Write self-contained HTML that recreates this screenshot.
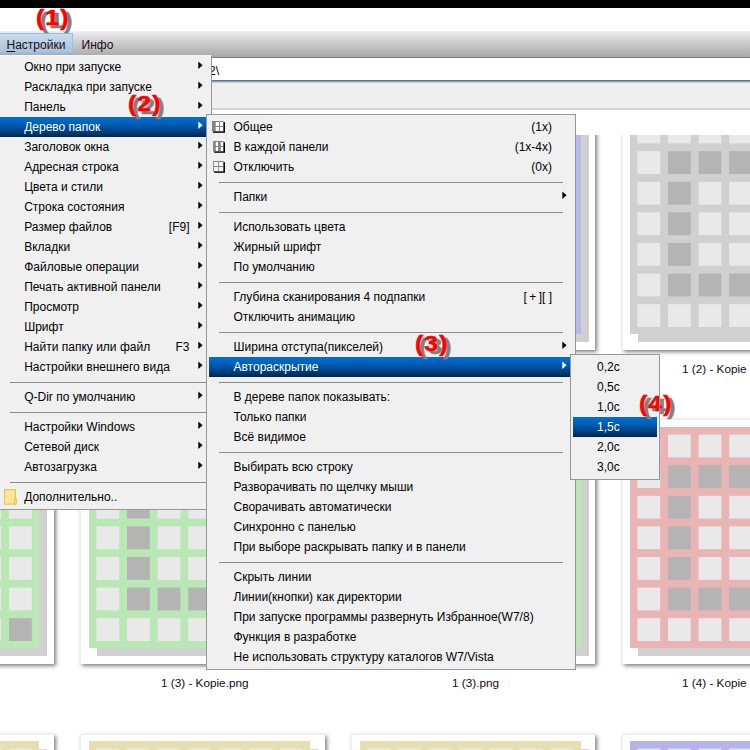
<!DOCTYPE html>
<html><head><meta charset="utf-8"><style>
*{margin:0;padding:0;box-sizing:border-box}
html,body{width:750px;height:750px;overflow:hidden;background:#fff;font-family:"Liberation Sans", sans-serif;font-size:12px;color:#000}
.abs{position:absolute}
#topbar{position:absolute;left:0;top:0;width:750px;height:8px;background:#000}
#menubar{position:absolute;left:0;top:31px;width:750px;height:27px;background:linear-gradient(#f0f0f0 0px,#d4d4d4 9px,#a9a9a9 25.5px,#7a7a7a 26.5px)}
#mbhl{position:absolute;left:-1px;top:33px;width:73.5px;height:20px;border:1px solid #90c2ee;background:linear-gradient(#c9dcee,#a9c1da)}
.mbt{position:absolute;top:38px;font-size:12px;color:#1a0a1a;white-space:nowrap}
#addr{position:absolute;left:0;top:58px;width:750px;height:22px;background:#fff}
#addrb{position:absolute;left:0;top:80px;width:750px;height:3px;background:linear-gradient(#707070 0,#707070 33%,#80a8cc 33%,#80a8cc 80%,#c8c8c8 80%)}
#tool{position:absolute;left:0;top:83px;width:750px;height:27px;background:linear-gradient(#efefef 0,#efefef 25px,#d6d6d6 25px)}
#content{position:absolute;left:0;top:135px;width:750px;height:615px;overflow:hidden}
#cin{position:absolute;left:0;top:-135px;width:750px;height:750px}
.fr{position:absolute;width:244.4px;height:244.8px;background:#fff;box-shadow:inset 1px 1px 1px rgba(0,0,0,0.07),2px 2px 4px rgba(0,0,0,0.5)}
.lbl{position:absolute;font-size:11.75px;white-space:nowrap;color:#140a14}
.menu{position:absolute;background:#f0f0f0;border:1px solid #979797;overflow:hidden}
.m1{border-top-color:#f6f6f6 !important}
.menu .tx{position:absolute;height:20px;line-height:20px;white-space:nowrap}
.menu .sc{position:absolute;height:20px;line-height:20px;white-space:nowrap}
.menu .sep{position:absolute;height:1px;background:#8c8c8c}
.menu .hlb{position:absolute;height:20px;background:linear-gradient(#0070d6,#005ab0 40%,#003e7c 75%,#00264c)}
.an{position:absolute;font-family:"Liberation Sans",sans-serif;font-weight:bold;font-size:22px;line-height:24px;color:#ff0000;-webkit-text-stroke:0.6px #ff0000;white-space:nowrap;letter-spacing:1px;transform:scaleX(1.12);transform-origin:0 0}
.an.sh{color:#808080;-webkit-text-stroke:0.6px #808080}
</style></head><body>
<div id="topbar"></div>
<div id="menubar"></div>
<div id="mbhl"></div>
<div class="mbt" style="left:6.5px"><u style="text-decoration-thickness:1px;text-underline-offset:2px">Н</u>астройки</div>
<div class="mbt" style="left:81.5px">Инфо</div>
<div id="addr"><div class="abs" style="left:209px;top:5.5px;font-size:12px;white-space:nowrap">2\</div></div>
<div id="addrb"></div>
<div id="tool"></div>
<div id="content"><div id="cin">
<div class="fr" style="left:-190.7px;top:105.6px"></div><svg style="position:absolute;left:-182.29999999999998px;top:113.39999999999999px" width="229" height="229"><rect x="8" y="8" width="221" height="221" fill="#d0d0d0"/><rect x="0" y="0" width="221" height="221" fill="#bae8b4"/><rect x="7.40" y="7.60" width="22.8" height="22.8" fill="#e9e9e9"/><rect x="38.00" y="7.60" width="22.8" height="22.8" fill="#e9e9e9"/><rect x="68.60" y="7.60" width="22.8" height="22.8" fill="#e9e9e9"/><rect x="99.20" y="7.60" width="22.8" height="22.8" fill="#e9e9e9"/><rect x="129.80" y="7.60" width="22.8" height="22.8" fill="#e9e9e9"/><rect x="160.40" y="7.60" width="22.8" height="22.8" fill="#e9e9e9"/><rect x="191.00" y="7.60" width="22.8" height="22.8" fill="#e9e9e9"/><rect x="7.40" y="38.20" width="22.8" height="22.8" fill="#e9e9e9"/><rect x="38.00" y="38.20" width="22.8" height="22.8" fill="#b4b4b4"/><rect x="68.60" y="38.20" width="22.8" height="22.8" fill="#b4b4b4"/><rect x="99.20" y="38.20" width="22.8" height="22.8" fill="#b4b4b4"/><rect x="129.80" y="38.20" width="22.8" height="22.8" fill="#b4b4b4"/><rect x="160.40" y="38.20" width="22.8" height="22.8" fill="#b4b4b4"/><rect x="191.00" y="38.20" width="22.8" height="22.8" fill="#e9e9e9"/><rect x="7.40" y="68.80" width="22.8" height="22.8" fill="#e9e9e9"/><rect x="38.00" y="68.80" width="22.8" height="22.8" fill="#b4b4b4"/><rect x="68.60" y="68.80" width="22.8" height="22.8" fill="#e9e9e9"/><rect x="99.20" y="68.80" width="22.8" height="22.8" fill="#e9e9e9"/><rect x="129.80" y="68.80" width="22.8" height="22.8" fill="#e9e9e9"/><rect x="160.40" y="68.80" width="22.8" height="22.8" fill="#e9e9e9"/><rect x="191.00" y="68.80" width="22.8" height="22.8" fill="#e9e9e9"/><rect x="7.40" y="99.40" width="22.8" height="22.8" fill="#e9e9e9"/><rect x="38.00" y="99.40" width="22.8" height="22.8" fill="#b4b4b4"/><rect x="68.60" y="99.40" width="22.8" height="22.8" fill="#e9e9e9"/><rect x="99.20" y="99.40" width="22.8" height="22.8" fill="#e9e9e9"/><rect x="129.80" y="99.40" width="22.8" height="22.8" fill="#e9e9e9"/><rect x="160.40" y="99.40" width="22.8" height="22.8" fill="#e9e9e9"/><rect x="191.00" y="99.40" width="22.8" height="22.8" fill="#e9e9e9"/><rect x="7.40" y="130.00" width="22.8" height="22.8" fill="#e9e9e9"/><rect x="38.00" y="130.00" width="22.8" height="22.8" fill="#b4b4b4"/><rect x="68.60" y="130.00" width="22.8" height="22.8" fill="#e9e9e9"/><rect x="99.20" y="130.00" width="22.8" height="22.8" fill="#e9e9e9"/><rect x="129.80" y="130.00" width="22.8" height="22.8" fill="#e9e9e9"/><rect x="160.40" y="130.00" width="22.8" height="22.8" fill="#e9e9e9"/><rect x="191.00" y="130.00" width="22.8" height="22.8" fill="#e9e9e9"/><rect x="7.40" y="160.60" width="22.8" height="22.8" fill="#e9e9e9"/><rect x="38.00" y="160.60" width="22.8" height="22.8" fill="#b4b4b4"/><rect x="68.60" y="160.60" width="22.8" height="22.8" fill="#b4b4b4"/><rect x="99.20" y="160.60" width="22.8" height="22.8" fill="#b4b4b4"/><rect x="129.80" y="160.60" width="22.8" height="22.8" fill="#b4b4b4"/><rect x="160.40" y="160.60" width="22.8" height="22.8" fill="#b4b4b4"/><rect x="191.00" y="160.60" width="22.8" height="22.8" fill="#e9e9e9"/><rect x="7.40" y="191.20" width="22.8" height="22.8" fill="#e9e9e9"/><rect x="38.00" y="191.20" width="22.8" height="22.8" fill="#e9e9e9"/><rect x="68.60" y="191.20" width="22.8" height="22.8" fill="#e9e9e9"/><rect x="99.20" y="191.20" width="22.8" height="22.8" fill="#e9e9e9"/><rect x="129.80" y="191.20" width="22.8" height="22.8" fill="#e9e9e9"/><rect x="160.40" y="191.20" width="22.8" height="22.8" fill="#e9e9e9"/><rect x="191.00" y="191.20" width="22.8" height="22.8" fill="#e9e9e9"/></svg><div class="fr" style="left:80.3px;top:105.6px"></div><svg style="position:absolute;left:88.7px;top:113.39999999999999px" width="229" height="229"><rect x="8" y="8" width="221" height="221" fill="#d0d0d0"/><rect x="0" y="0" width="221" height="221" fill="#bae8b4"/><rect x="7.40" y="7.60" width="22.8" height="22.8" fill="#e9e9e9"/><rect x="38.00" y="7.60" width="22.8" height="22.8" fill="#e9e9e9"/><rect x="68.60" y="7.60" width="22.8" height="22.8" fill="#e9e9e9"/><rect x="99.20" y="7.60" width="22.8" height="22.8" fill="#e9e9e9"/><rect x="129.80" y="7.60" width="22.8" height="22.8" fill="#e9e9e9"/><rect x="160.40" y="7.60" width="22.8" height="22.8" fill="#e9e9e9"/><rect x="191.00" y="7.60" width="22.8" height="22.8" fill="#e9e9e9"/><rect x="7.40" y="38.20" width="22.8" height="22.8" fill="#e9e9e9"/><rect x="38.00" y="38.20" width="22.8" height="22.8" fill="#b4b4b4"/><rect x="68.60" y="38.20" width="22.8" height="22.8" fill="#b4b4b4"/><rect x="99.20" y="38.20" width="22.8" height="22.8" fill="#b4b4b4"/><rect x="129.80" y="38.20" width="22.8" height="22.8" fill="#b4b4b4"/><rect x="160.40" y="38.20" width="22.8" height="22.8" fill="#b4b4b4"/><rect x="191.00" y="38.20" width="22.8" height="22.8" fill="#e9e9e9"/><rect x="7.40" y="68.80" width="22.8" height="22.8" fill="#e9e9e9"/><rect x="38.00" y="68.80" width="22.8" height="22.8" fill="#b4b4b4"/><rect x="68.60" y="68.80" width="22.8" height="22.8" fill="#e9e9e9"/><rect x="99.20" y="68.80" width="22.8" height="22.8" fill="#e9e9e9"/><rect x="129.80" y="68.80" width="22.8" height="22.8" fill="#e9e9e9"/><rect x="160.40" y="68.80" width="22.8" height="22.8" fill="#e9e9e9"/><rect x="191.00" y="68.80" width="22.8" height="22.8" fill="#e9e9e9"/><rect x="7.40" y="99.40" width="22.8" height="22.8" fill="#e9e9e9"/><rect x="38.00" y="99.40" width="22.8" height="22.8" fill="#b4b4b4"/><rect x="68.60" y="99.40" width="22.8" height="22.8" fill="#e9e9e9"/><rect x="99.20" y="99.40" width="22.8" height="22.8" fill="#e9e9e9"/><rect x="129.80" y="99.40" width="22.8" height="22.8" fill="#e9e9e9"/><rect x="160.40" y="99.40" width="22.8" height="22.8" fill="#e9e9e9"/><rect x="191.00" y="99.40" width="22.8" height="22.8" fill="#e9e9e9"/><rect x="7.40" y="130.00" width="22.8" height="22.8" fill="#e9e9e9"/><rect x="38.00" y="130.00" width="22.8" height="22.8" fill="#b4b4b4"/><rect x="68.60" y="130.00" width="22.8" height="22.8" fill="#e9e9e9"/><rect x="99.20" y="130.00" width="22.8" height="22.8" fill="#e9e9e9"/><rect x="129.80" y="130.00" width="22.8" height="22.8" fill="#e9e9e9"/><rect x="160.40" y="130.00" width="22.8" height="22.8" fill="#e9e9e9"/><rect x="191.00" y="130.00" width="22.8" height="22.8" fill="#e9e9e9"/><rect x="7.40" y="160.60" width="22.8" height="22.8" fill="#e9e9e9"/><rect x="38.00" y="160.60" width="22.8" height="22.8" fill="#b4b4b4"/><rect x="68.60" y="160.60" width="22.8" height="22.8" fill="#b4b4b4"/><rect x="99.20" y="160.60" width="22.8" height="22.8" fill="#b4b4b4"/><rect x="129.80" y="160.60" width="22.8" height="22.8" fill="#b4b4b4"/><rect x="160.40" y="160.60" width="22.8" height="22.8" fill="#b4b4b4"/><rect x="191.00" y="160.60" width="22.8" height="22.8" fill="#e9e9e9"/><rect x="7.40" y="191.20" width="22.8" height="22.8" fill="#e9e9e9"/><rect x="38.00" y="191.20" width="22.8" height="22.8" fill="#e9e9e9"/><rect x="68.60" y="191.20" width="22.8" height="22.8" fill="#e9e9e9"/><rect x="99.20" y="191.20" width="22.8" height="22.8" fill="#e9e9e9"/><rect x="129.80" y="191.20" width="22.8" height="22.8" fill="#e9e9e9"/><rect x="160.40" y="191.20" width="22.8" height="22.8" fill="#e9e9e9"/><rect x="191.00" y="191.20" width="22.8" height="22.8" fill="#e9e9e9"/></svg><div class="fr" style="left:351.1px;top:105.6px"></div><svg style="position:absolute;left:359.5px;top:113.39999999999999px" width="229" height="229"><rect x="8" y="8" width="221" height="221" fill="#d0d0d0"/><rect x="0" y="0" width="221" height="221" fill="#b8b8ec"/><rect x="7.40" y="7.60" width="22.8" height="22.8" fill="#e9e9e9"/><rect x="38.00" y="7.60" width="22.8" height="22.8" fill="#e9e9e9"/><rect x="68.60" y="7.60" width="22.8" height="22.8" fill="#e9e9e9"/><rect x="99.20" y="7.60" width="22.8" height="22.8" fill="#e9e9e9"/><rect x="129.80" y="7.60" width="22.8" height="22.8" fill="#e9e9e9"/><rect x="160.40" y="7.60" width="22.8" height="22.8" fill="#e9e9e9"/><rect x="191.00" y="7.60" width="22.8" height="22.8" fill="#e9e9e9"/><rect x="7.40" y="38.20" width="22.8" height="22.8" fill="#e9e9e9"/><rect x="38.00" y="38.20" width="22.8" height="22.8" fill="#b4b4b4"/><rect x="68.60" y="38.20" width="22.8" height="22.8" fill="#b4b4b4"/><rect x="99.20" y="38.20" width="22.8" height="22.8" fill="#b4b4b4"/><rect x="129.80" y="38.20" width="22.8" height="22.8" fill="#b4b4b4"/><rect x="160.40" y="38.20" width="22.8" height="22.8" fill="#b4b4b4"/><rect x="191.00" y="38.20" width="22.8" height="22.8" fill="#e9e9e9"/><rect x="7.40" y="68.80" width="22.8" height="22.8" fill="#e9e9e9"/><rect x="38.00" y="68.80" width="22.8" height="22.8" fill="#b4b4b4"/><rect x="68.60" y="68.80" width="22.8" height="22.8" fill="#e9e9e9"/><rect x="99.20" y="68.80" width="22.8" height="22.8" fill="#e9e9e9"/><rect x="129.80" y="68.80" width="22.8" height="22.8" fill="#e9e9e9"/><rect x="160.40" y="68.80" width="22.8" height="22.8" fill="#e9e9e9"/><rect x="191.00" y="68.80" width="22.8" height="22.8" fill="#e9e9e9"/><rect x="7.40" y="99.40" width="22.8" height="22.8" fill="#e9e9e9"/><rect x="38.00" y="99.40" width="22.8" height="22.8" fill="#b4b4b4"/><rect x="68.60" y="99.40" width="22.8" height="22.8" fill="#e9e9e9"/><rect x="99.20" y="99.40" width="22.8" height="22.8" fill="#e9e9e9"/><rect x="129.80" y="99.40" width="22.8" height="22.8" fill="#e9e9e9"/><rect x="160.40" y="99.40" width="22.8" height="22.8" fill="#e9e9e9"/><rect x="191.00" y="99.40" width="22.8" height="22.8" fill="#e9e9e9"/><rect x="7.40" y="130.00" width="22.8" height="22.8" fill="#e9e9e9"/><rect x="38.00" y="130.00" width="22.8" height="22.8" fill="#b4b4b4"/><rect x="68.60" y="130.00" width="22.8" height="22.8" fill="#e9e9e9"/><rect x="99.20" y="130.00" width="22.8" height="22.8" fill="#e9e9e9"/><rect x="129.80" y="130.00" width="22.8" height="22.8" fill="#e9e9e9"/><rect x="160.40" y="130.00" width="22.8" height="22.8" fill="#e9e9e9"/><rect x="191.00" y="130.00" width="22.8" height="22.8" fill="#e9e9e9"/><rect x="7.40" y="160.60" width="22.8" height="22.8" fill="#e9e9e9"/><rect x="38.00" y="160.60" width="22.8" height="22.8" fill="#b4b4b4"/><rect x="68.60" y="160.60" width="22.8" height="22.8" fill="#b4b4b4"/><rect x="99.20" y="160.60" width="22.8" height="22.8" fill="#b4b4b4"/><rect x="129.80" y="160.60" width="22.8" height="22.8" fill="#b4b4b4"/><rect x="160.40" y="160.60" width="22.8" height="22.8" fill="#b4b4b4"/><rect x="191.00" y="160.60" width="22.8" height="22.8" fill="#e9e9e9"/><rect x="7.40" y="191.20" width="22.8" height="22.8" fill="#e9e9e9"/><rect x="38.00" y="191.20" width="22.8" height="22.8" fill="#e9e9e9"/><rect x="68.60" y="191.20" width="22.8" height="22.8" fill="#e9e9e9"/><rect x="99.20" y="191.20" width="22.8" height="22.8" fill="#e9e9e9"/><rect x="129.80" y="191.20" width="22.8" height="22.8" fill="#e9e9e9"/><rect x="160.40" y="191.20" width="22.8" height="22.8" fill="#e9e9e9"/><rect x="191.00" y="191.20" width="22.8" height="22.8" fill="#e9e9e9"/></svg><div class="fr" style="left:622.0px;top:105.6px"></div><svg style="position:absolute;left:630.4px;top:113.39999999999999px" width="229" height="229"><rect x="8" y="8" width="221" height="221" fill="#d0d0d0"/><rect x="0" y="0" width="221" height="221" fill="#d0d0d0"/><rect x="7.40" y="7.60" width="22.8" height="22.8" fill="#e9e9e9"/><rect x="38.00" y="7.60" width="22.8" height="22.8" fill="#e9e9e9"/><rect x="68.60" y="7.60" width="22.8" height="22.8" fill="#e9e9e9"/><rect x="99.20" y="7.60" width="22.8" height="22.8" fill="#e9e9e9"/><rect x="129.80" y="7.60" width="22.8" height="22.8" fill="#e9e9e9"/><rect x="160.40" y="7.60" width="22.8" height="22.8" fill="#e9e9e9"/><rect x="191.00" y="7.60" width="22.8" height="22.8" fill="#e9e9e9"/><rect x="7.40" y="38.20" width="22.8" height="22.8" fill="#e9e9e9"/><rect x="38.00" y="38.20" width="22.8" height="22.8" fill="#b4b4b4"/><rect x="68.60" y="38.20" width="22.8" height="22.8" fill="#b4b4b4"/><rect x="99.20" y="38.20" width="22.8" height="22.8" fill="#b4b4b4"/><rect x="129.80" y="38.20" width="22.8" height="22.8" fill="#b4b4b4"/><rect x="160.40" y="38.20" width="22.8" height="22.8" fill="#b4b4b4"/><rect x="191.00" y="38.20" width="22.8" height="22.8" fill="#e9e9e9"/><rect x="7.40" y="68.80" width="22.8" height="22.8" fill="#e9e9e9"/><rect x="38.00" y="68.80" width="22.8" height="22.8" fill="#b4b4b4"/><rect x="68.60" y="68.80" width="22.8" height="22.8" fill="#e9e9e9"/><rect x="99.20" y="68.80" width="22.8" height="22.8" fill="#e9e9e9"/><rect x="129.80" y="68.80" width="22.8" height="22.8" fill="#e9e9e9"/><rect x="160.40" y="68.80" width="22.8" height="22.8" fill="#e9e9e9"/><rect x="191.00" y="68.80" width="22.8" height="22.8" fill="#e9e9e9"/><rect x="7.40" y="99.40" width="22.8" height="22.8" fill="#e9e9e9"/><rect x="38.00" y="99.40" width="22.8" height="22.8" fill="#b4b4b4"/><rect x="68.60" y="99.40" width="22.8" height="22.8" fill="#e9e9e9"/><rect x="99.20" y="99.40" width="22.8" height="22.8" fill="#e9e9e9"/><rect x="129.80" y="99.40" width="22.8" height="22.8" fill="#e9e9e9"/><rect x="160.40" y="99.40" width="22.8" height="22.8" fill="#e9e9e9"/><rect x="191.00" y="99.40" width="22.8" height="22.8" fill="#e9e9e9"/><rect x="7.40" y="130.00" width="22.8" height="22.8" fill="#e9e9e9"/><rect x="38.00" y="130.00" width="22.8" height="22.8" fill="#b4b4b4"/><rect x="68.60" y="130.00" width="22.8" height="22.8" fill="#e9e9e9"/><rect x="99.20" y="130.00" width="22.8" height="22.8" fill="#e9e9e9"/><rect x="129.80" y="130.00" width="22.8" height="22.8" fill="#e9e9e9"/><rect x="160.40" y="130.00" width="22.8" height="22.8" fill="#e9e9e9"/><rect x="191.00" y="130.00" width="22.8" height="22.8" fill="#e9e9e9"/><rect x="7.40" y="160.60" width="22.8" height="22.8" fill="#e9e9e9"/><rect x="38.00" y="160.60" width="22.8" height="22.8" fill="#b4b4b4"/><rect x="68.60" y="160.60" width="22.8" height="22.8" fill="#b4b4b4"/><rect x="99.20" y="160.60" width="22.8" height="22.8" fill="#b4b4b4"/><rect x="129.80" y="160.60" width="22.8" height="22.8" fill="#b4b4b4"/><rect x="160.40" y="160.60" width="22.8" height="22.8" fill="#b4b4b4"/><rect x="191.00" y="160.60" width="22.8" height="22.8" fill="#e9e9e9"/><rect x="7.40" y="191.20" width="22.8" height="22.8" fill="#e9e9e9"/><rect x="38.00" y="191.20" width="22.8" height="22.8" fill="#e9e9e9"/><rect x="68.60" y="191.20" width="22.8" height="22.8" fill="#e9e9e9"/><rect x="99.20" y="191.20" width="22.8" height="22.8" fill="#e9e9e9"/><rect x="129.80" y="191.20" width="22.8" height="22.8" fill="#e9e9e9"/><rect x="160.40" y="191.20" width="22.8" height="22.8" fill="#e9e9e9"/><rect x="191.00" y="191.20" width="22.8" height="22.8" fill="#e9e9e9"/></svg><div class="fr" style="left:-190.7px;top:419.4px"></div><svg style="position:absolute;left:-182.29999999999998px;top:427.2px" width="229" height="229"><rect x="8" y="8" width="221" height="221" fill="#d0d0d0"/><rect x="0" y="0" width="221" height="221" fill="#bae8b4"/><rect x="7.40" y="7.60" width="22.8" height="22.8" fill="#e9e9e9"/><rect x="38.00" y="7.60" width="22.8" height="22.8" fill="#e9e9e9"/><rect x="68.60" y="7.60" width="22.8" height="22.8" fill="#e9e9e9"/><rect x="99.20" y="7.60" width="22.8" height="22.8" fill="#e9e9e9"/><rect x="129.80" y="7.60" width="22.8" height="22.8" fill="#e9e9e9"/><rect x="160.40" y="7.60" width="22.8" height="22.8" fill="#e9e9e9"/><rect x="191.00" y="7.60" width="22.8" height="22.8" fill="#e9e9e9"/><rect x="7.40" y="38.20" width="22.8" height="22.8" fill="#e9e9e9"/><rect x="38.00" y="38.20" width="22.8" height="22.8" fill="#e9e9e9"/><rect x="68.60" y="38.20" width="22.8" height="22.8" fill="#e9e9e9"/><rect x="99.20" y="38.20" width="22.8" height="22.8" fill="#e9e9e9"/><rect x="129.80" y="38.20" width="22.8" height="22.8" fill="#e9e9e9"/><rect x="160.40" y="38.20" width="22.8" height="22.8" fill="#e9e9e9"/><rect x="191.00" y="38.20" width="22.8" height="22.8" fill="#e9e9e9"/><rect x="7.40" y="68.80" width="22.8" height="22.8" fill="#e9e9e9"/><rect x="38.00" y="68.80" width="22.8" height="22.8" fill="#e9e9e9"/><rect x="68.60" y="68.80" width="22.8" height="22.8" fill="#e9e9e9"/><rect x="99.20" y="68.80" width="22.8" height="22.8" fill="#e9e9e9"/><rect x="129.80" y="68.80" width="22.8" height="22.8" fill="#e9e9e9"/><rect x="160.40" y="68.80" width="22.8" height="22.8" fill="#e9e9e9"/><rect x="191.00" y="68.80" width="22.8" height="22.8" fill="#e9e9e9"/><rect x="7.40" y="99.40" width="22.8" height="22.8" fill="#e9e9e9"/><rect x="38.00" y="99.40" width="22.8" height="22.8" fill="#e9e9e9"/><rect x="68.60" y="99.40" width="22.8" height="22.8" fill="#e9e9e9"/><rect x="99.20" y="99.40" width="22.8" height="22.8" fill="#e9e9e9"/><rect x="129.80" y="99.40" width="22.8" height="22.8" fill="#e9e9e9"/><rect x="160.40" y="99.40" width="22.8" height="22.8" fill="#e9e9e9"/><rect x="191.00" y="99.40" width="22.8" height="22.8" fill="#e9e9e9"/><rect x="7.40" y="130.00" width="22.8" height="22.8" fill="#e9e9e9"/><rect x="38.00" y="130.00" width="22.8" height="22.8" fill="#e9e9e9"/><rect x="68.60" y="130.00" width="22.8" height="22.8" fill="#e9e9e9"/><rect x="99.20" y="130.00" width="22.8" height="22.8" fill="#e9e9e9"/><rect x="129.80" y="130.00" width="22.8" height="22.8" fill="#e9e9e9"/><rect x="160.40" y="130.00" width="22.8" height="22.8" fill="#e9e9e9"/><rect x="191.00" y="130.00" width="22.8" height="22.8" fill="#e9e9e9"/><rect x="7.40" y="160.60" width="22.8" height="22.8" fill="#e9e9e9"/><rect x="38.00" y="160.60" width="22.8" height="22.8" fill="#e9e9e9"/><rect x="68.60" y="160.60" width="22.8" height="22.8" fill="#e9e9e9"/><rect x="99.20" y="160.60" width="22.8" height="22.8" fill="#e9e9e9"/><rect x="129.80" y="160.60" width="22.8" height="22.8" fill="#e9e9e9"/><rect x="160.40" y="160.60" width="22.8" height="22.8" fill="#e9e9e9"/><rect x="191.00" y="160.60" width="22.8" height="22.8" fill="#e9e9e9"/><rect x="7.40" y="191.20" width="22.8" height="22.8" fill="#e9e9e9"/><rect x="38.00" y="191.20" width="22.8" height="22.8" fill="#e9e9e9"/><rect x="68.60" y="191.20" width="22.8" height="22.8" fill="#e9e9e9"/><rect x="99.20" y="191.20" width="22.8" height="22.8" fill="#e9e9e9"/><rect x="129.80" y="191.20" width="22.8" height="22.8" fill="#e9e9e9"/><rect x="160.40" y="191.20" width="22.8" height="22.8" fill="#e9e9e9"/><rect x="191.00" y="191.20" width="22.8" height="22.8" fill="#b4b4b4"/></svg><div class="fr" style="left:80.3px;top:419.4px"></div><svg style="position:absolute;left:88.7px;top:427.2px" width="229" height="229"><rect x="8" y="8" width="221" height="221" fill="#d0d0d0"/><rect x="0" y="0" width="221" height="221" fill="#bae8b4"/><rect x="7.40" y="7.60" width="22.8" height="22.8" fill="#e9e9e9"/><rect x="38.00" y="7.60" width="22.8" height="22.8" fill="#e9e9e9"/><rect x="68.60" y="7.60" width="22.8" height="22.8" fill="#e9e9e9"/><rect x="99.20" y="7.60" width="22.8" height="22.8" fill="#e9e9e9"/><rect x="129.80" y="7.60" width="22.8" height="22.8" fill="#e9e9e9"/><rect x="160.40" y="7.60" width="22.8" height="22.8" fill="#e9e9e9"/><rect x="191.00" y="7.60" width="22.8" height="22.8" fill="#e9e9e9"/><rect x="7.40" y="38.20" width="22.8" height="22.8" fill="#e9e9e9"/><rect x="38.00" y="38.20" width="22.8" height="22.8" fill="#b4b4b4"/><rect x="68.60" y="38.20" width="22.8" height="22.8" fill="#b4b4b4"/><rect x="99.20" y="38.20" width="22.8" height="22.8" fill="#b4b4b4"/><rect x="129.80" y="38.20" width="22.8" height="22.8" fill="#b4b4b4"/><rect x="160.40" y="38.20" width="22.8" height="22.8" fill="#b4b4b4"/><rect x="191.00" y="38.20" width="22.8" height="22.8" fill="#e9e9e9"/><rect x="7.40" y="68.80" width="22.8" height="22.8" fill="#e9e9e9"/><rect x="38.00" y="68.80" width="22.8" height="22.8" fill="#b4b4b4"/><rect x="68.60" y="68.80" width="22.8" height="22.8" fill="#e9e9e9"/><rect x="99.20" y="68.80" width="22.8" height="22.8" fill="#e9e9e9"/><rect x="129.80" y="68.80" width="22.8" height="22.8" fill="#e9e9e9"/><rect x="160.40" y="68.80" width="22.8" height="22.8" fill="#e9e9e9"/><rect x="191.00" y="68.80" width="22.8" height="22.8" fill="#e9e9e9"/><rect x="7.40" y="99.40" width="22.8" height="22.8" fill="#e9e9e9"/><rect x="38.00" y="99.40" width="22.8" height="22.8" fill="#b4b4b4"/><rect x="68.60" y="99.40" width="22.8" height="22.8" fill="#e9e9e9"/><rect x="99.20" y="99.40" width="22.8" height="22.8" fill="#e9e9e9"/><rect x="129.80" y="99.40" width="22.8" height="22.8" fill="#e9e9e9"/><rect x="160.40" y="99.40" width="22.8" height="22.8" fill="#e9e9e9"/><rect x="191.00" y="99.40" width="22.8" height="22.8" fill="#e9e9e9"/><rect x="7.40" y="130.00" width="22.8" height="22.8" fill="#e9e9e9"/><rect x="38.00" y="130.00" width="22.8" height="22.8" fill="#b4b4b4"/><rect x="68.60" y="130.00" width="22.8" height="22.8" fill="#e9e9e9"/><rect x="99.20" y="130.00" width="22.8" height="22.8" fill="#e9e9e9"/><rect x="129.80" y="130.00" width="22.8" height="22.8" fill="#e9e9e9"/><rect x="160.40" y="130.00" width="22.8" height="22.8" fill="#e9e9e9"/><rect x="191.00" y="130.00" width="22.8" height="22.8" fill="#e9e9e9"/><rect x="7.40" y="160.60" width="22.8" height="22.8" fill="#e9e9e9"/><rect x="38.00" y="160.60" width="22.8" height="22.8" fill="#b4b4b4"/><rect x="68.60" y="160.60" width="22.8" height="22.8" fill="#b4b4b4"/><rect x="99.20" y="160.60" width="22.8" height="22.8" fill="#b4b4b4"/><rect x="129.80" y="160.60" width="22.8" height="22.8" fill="#b4b4b4"/><rect x="160.40" y="160.60" width="22.8" height="22.8" fill="#b4b4b4"/><rect x="191.00" y="160.60" width="22.8" height="22.8" fill="#e9e9e9"/><rect x="7.40" y="191.20" width="22.8" height="22.8" fill="#e9e9e9"/><rect x="38.00" y="191.20" width="22.8" height="22.8" fill="#e9e9e9"/><rect x="68.60" y="191.20" width="22.8" height="22.8" fill="#e9e9e9"/><rect x="99.20" y="191.20" width="22.8" height="22.8" fill="#e9e9e9"/><rect x="129.80" y="191.20" width="22.8" height="22.8" fill="#e9e9e9"/><rect x="160.40" y="191.20" width="22.8" height="22.8" fill="#e9e9e9"/><rect x="191.00" y="191.20" width="22.8" height="22.8" fill="#e9e9e9"/></svg><div class="fr" style="left:351.1px;top:419.4px"></div><svg style="position:absolute;left:359.5px;top:427.2px" width="229" height="229"><rect x="8" y="8" width="221" height="221" fill="#d0d0d0"/><rect x="0" y="0" width="221" height="221" fill="#bae8b4"/><rect x="7.40" y="7.60" width="22.8" height="22.8" fill="#e9e9e9"/><rect x="38.00" y="7.60" width="22.8" height="22.8" fill="#e9e9e9"/><rect x="68.60" y="7.60" width="22.8" height="22.8" fill="#e9e9e9"/><rect x="99.20" y="7.60" width="22.8" height="22.8" fill="#e9e9e9"/><rect x="129.80" y="7.60" width="22.8" height="22.8" fill="#e9e9e9"/><rect x="160.40" y="7.60" width="22.8" height="22.8" fill="#e9e9e9"/><rect x="191.00" y="7.60" width="22.8" height="22.8" fill="#e9e9e9"/><rect x="7.40" y="38.20" width="22.8" height="22.8" fill="#e9e9e9"/><rect x="38.00" y="38.20" width="22.8" height="22.8" fill="#b4b4b4"/><rect x="68.60" y="38.20" width="22.8" height="22.8" fill="#b4b4b4"/><rect x="99.20" y="38.20" width="22.8" height="22.8" fill="#b4b4b4"/><rect x="129.80" y="38.20" width="22.8" height="22.8" fill="#b4b4b4"/><rect x="160.40" y="38.20" width="22.8" height="22.8" fill="#b4b4b4"/><rect x="191.00" y="38.20" width="22.8" height="22.8" fill="#e9e9e9"/><rect x="7.40" y="68.80" width="22.8" height="22.8" fill="#e9e9e9"/><rect x="38.00" y="68.80" width="22.8" height="22.8" fill="#b4b4b4"/><rect x="68.60" y="68.80" width="22.8" height="22.8" fill="#e9e9e9"/><rect x="99.20" y="68.80" width="22.8" height="22.8" fill="#e9e9e9"/><rect x="129.80" y="68.80" width="22.8" height="22.8" fill="#e9e9e9"/><rect x="160.40" y="68.80" width="22.8" height="22.8" fill="#e9e9e9"/><rect x="191.00" y="68.80" width="22.8" height="22.8" fill="#e9e9e9"/><rect x="7.40" y="99.40" width="22.8" height="22.8" fill="#e9e9e9"/><rect x="38.00" y="99.40" width="22.8" height="22.8" fill="#b4b4b4"/><rect x="68.60" y="99.40" width="22.8" height="22.8" fill="#e9e9e9"/><rect x="99.20" y="99.40" width="22.8" height="22.8" fill="#e9e9e9"/><rect x="129.80" y="99.40" width="22.8" height="22.8" fill="#e9e9e9"/><rect x="160.40" y="99.40" width="22.8" height="22.8" fill="#e9e9e9"/><rect x="191.00" y="99.40" width="22.8" height="22.8" fill="#e9e9e9"/><rect x="7.40" y="130.00" width="22.8" height="22.8" fill="#e9e9e9"/><rect x="38.00" y="130.00" width="22.8" height="22.8" fill="#b4b4b4"/><rect x="68.60" y="130.00" width="22.8" height="22.8" fill="#e9e9e9"/><rect x="99.20" y="130.00" width="22.8" height="22.8" fill="#e9e9e9"/><rect x="129.80" y="130.00" width="22.8" height="22.8" fill="#e9e9e9"/><rect x="160.40" y="130.00" width="22.8" height="22.8" fill="#e9e9e9"/><rect x="191.00" y="130.00" width="22.8" height="22.8" fill="#e9e9e9"/><rect x="7.40" y="160.60" width="22.8" height="22.8" fill="#e9e9e9"/><rect x="38.00" y="160.60" width="22.8" height="22.8" fill="#b4b4b4"/><rect x="68.60" y="160.60" width="22.8" height="22.8" fill="#b4b4b4"/><rect x="99.20" y="160.60" width="22.8" height="22.8" fill="#b4b4b4"/><rect x="129.80" y="160.60" width="22.8" height="22.8" fill="#b4b4b4"/><rect x="160.40" y="160.60" width="22.8" height="22.8" fill="#b4b4b4"/><rect x="191.00" y="160.60" width="22.8" height="22.8" fill="#e9e9e9"/><rect x="7.40" y="191.20" width="22.8" height="22.8" fill="#e9e9e9"/><rect x="38.00" y="191.20" width="22.8" height="22.8" fill="#e9e9e9"/><rect x="68.60" y="191.20" width="22.8" height="22.8" fill="#e9e9e9"/><rect x="99.20" y="191.20" width="22.8" height="22.8" fill="#e9e9e9"/><rect x="129.80" y="191.20" width="22.8" height="22.8" fill="#e9e9e9"/><rect x="160.40" y="191.20" width="22.8" height="22.8" fill="#e9e9e9"/><rect x="191.00" y="191.20" width="22.8" height="22.8" fill="#e9e9e9"/></svg><div class="fr" style="left:622.0px;top:419.4px"></div><svg style="position:absolute;left:630.4px;top:427.2px" width="229" height="229"><rect x="8" y="8" width="221" height="221" fill="#d0d0d0"/><rect x="0" y="0" width="221" height="221" fill="#e8b4b4"/><rect x="7.40" y="7.60" width="22.8" height="22.8" fill="#e9e9e9"/><rect x="38.00" y="7.60" width="22.8" height="22.8" fill="#e9e9e9"/><rect x="68.60" y="7.60" width="22.8" height="22.8" fill="#e9e9e9"/><rect x="99.20" y="7.60" width="22.8" height="22.8" fill="#e9e9e9"/><rect x="129.80" y="7.60" width="22.8" height="22.8" fill="#e9e9e9"/><rect x="160.40" y="7.60" width="22.8" height="22.8" fill="#e9e9e9"/><rect x="191.00" y="7.60" width="22.8" height="22.8" fill="#e9e9e9"/><rect x="7.40" y="38.20" width="22.8" height="22.8" fill="#e9e9e9"/><rect x="38.00" y="38.20" width="22.8" height="22.8" fill="#b4b4b4"/><rect x="68.60" y="38.20" width="22.8" height="22.8" fill="#b4b4b4"/><rect x="99.20" y="38.20" width="22.8" height="22.8" fill="#b4b4b4"/><rect x="129.80" y="38.20" width="22.8" height="22.8" fill="#b4b4b4"/><rect x="160.40" y="38.20" width="22.8" height="22.8" fill="#b4b4b4"/><rect x="191.00" y="38.20" width="22.8" height="22.8" fill="#e9e9e9"/><rect x="7.40" y="68.80" width="22.8" height="22.8" fill="#e9e9e9"/><rect x="38.00" y="68.80" width="22.8" height="22.8" fill="#b4b4b4"/><rect x="68.60" y="68.80" width="22.8" height="22.8" fill="#e9e9e9"/><rect x="99.20" y="68.80" width="22.8" height="22.8" fill="#e9e9e9"/><rect x="129.80" y="68.80" width="22.8" height="22.8" fill="#e9e9e9"/><rect x="160.40" y="68.80" width="22.8" height="22.8" fill="#e9e9e9"/><rect x="191.00" y="68.80" width="22.8" height="22.8" fill="#e9e9e9"/><rect x="7.40" y="99.40" width="22.8" height="22.8" fill="#e9e9e9"/><rect x="38.00" y="99.40" width="22.8" height="22.8" fill="#b4b4b4"/><rect x="68.60" y="99.40" width="22.8" height="22.8" fill="#e9e9e9"/><rect x="99.20" y="99.40" width="22.8" height="22.8" fill="#e9e9e9"/><rect x="129.80" y="99.40" width="22.8" height="22.8" fill="#e9e9e9"/><rect x="160.40" y="99.40" width="22.8" height="22.8" fill="#e9e9e9"/><rect x="191.00" y="99.40" width="22.8" height="22.8" fill="#e9e9e9"/><rect x="7.40" y="130.00" width="22.8" height="22.8" fill="#e9e9e9"/><rect x="38.00" y="130.00" width="22.8" height="22.8" fill="#b4b4b4"/><rect x="68.60" y="130.00" width="22.8" height="22.8" fill="#e9e9e9"/><rect x="99.20" y="130.00" width="22.8" height="22.8" fill="#e9e9e9"/><rect x="129.80" y="130.00" width="22.8" height="22.8" fill="#e9e9e9"/><rect x="160.40" y="130.00" width="22.8" height="22.8" fill="#e9e9e9"/><rect x="191.00" y="130.00" width="22.8" height="22.8" fill="#e9e9e9"/><rect x="7.40" y="160.60" width="22.8" height="22.8" fill="#e9e9e9"/><rect x="38.00" y="160.60" width="22.8" height="22.8" fill="#b4b4b4"/><rect x="68.60" y="160.60" width="22.8" height="22.8" fill="#b4b4b4"/><rect x="99.20" y="160.60" width="22.8" height="22.8" fill="#b4b4b4"/><rect x="129.80" y="160.60" width="22.8" height="22.8" fill="#b4b4b4"/><rect x="160.40" y="160.60" width="22.8" height="22.8" fill="#b4b4b4"/><rect x="191.00" y="160.60" width="22.8" height="22.8" fill="#e9e9e9"/><rect x="7.40" y="191.20" width="22.8" height="22.8" fill="#e9e9e9"/><rect x="38.00" y="191.20" width="22.8" height="22.8" fill="#e9e9e9"/><rect x="68.60" y="191.20" width="22.8" height="22.8" fill="#e9e9e9"/><rect x="99.20" y="191.20" width="22.8" height="22.8" fill="#e9e9e9"/><rect x="129.80" y="191.20" width="22.8" height="22.8" fill="#e9e9e9"/><rect x="160.40" y="191.20" width="22.8" height="22.8" fill="#e9e9e9"/><rect x="191.00" y="191.20" width="22.8" height="22.8" fill="#e9e9e9"/></svg><div class="fr" style="left:-190.7px;top:733.5px"></div><svg style="position:absolute;left:-182.29999999999998px;top:741.3px" width="229" height="229"><rect x="8" y="8" width="221" height="221" fill="#d0d0d0"/><rect x="0" y="0" width="221" height="221" fill="#e6e0b0"/><rect x="7.40" y="7.60" width="22.8" height="22.8" fill="#e9e9e9"/><rect x="38.00" y="7.60" width="22.8" height="22.8" fill="#e9e9e9"/><rect x="68.60" y="7.60" width="22.8" height="22.8" fill="#e9e9e9"/><rect x="99.20" y="7.60" width="22.8" height="22.8" fill="#e9e9e9"/><rect x="129.80" y="7.60" width="22.8" height="22.8" fill="#e9e9e9"/><rect x="160.40" y="7.60" width="22.8" height="22.8" fill="#e9e9e9"/><rect x="191.00" y="7.60" width="22.8" height="22.8" fill="#e9e9e9"/><rect x="7.40" y="38.20" width="22.8" height="22.8" fill="#e9e9e9"/><rect x="38.00" y="38.20" width="22.8" height="22.8" fill="#b4b4b4"/><rect x="68.60" y="38.20" width="22.8" height="22.8" fill="#b4b4b4"/><rect x="99.20" y="38.20" width="22.8" height="22.8" fill="#b4b4b4"/><rect x="129.80" y="38.20" width="22.8" height="22.8" fill="#b4b4b4"/><rect x="160.40" y="38.20" width="22.8" height="22.8" fill="#b4b4b4"/><rect x="191.00" y="38.20" width="22.8" height="22.8" fill="#e9e9e9"/><rect x="7.40" y="68.80" width="22.8" height="22.8" fill="#e9e9e9"/><rect x="38.00" y="68.80" width="22.8" height="22.8" fill="#b4b4b4"/><rect x="68.60" y="68.80" width="22.8" height="22.8" fill="#e9e9e9"/><rect x="99.20" y="68.80" width="22.8" height="22.8" fill="#e9e9e9"/><rect x="129.80" y="68.80" width="22.8" height="22.8" fill="#e9e9e9"/><rect x="160.40" y="68.80" width="22.8" height="22.8" fill="#e9e9e9"/><rect x="191.00" y="68.80" width="22.8" height="22.8" fill="#e9e9e9"/><rect x="7.40" y="99.40" width="22.8" height="22.8" fill="#e9e9e9"/><rect x="38.00" y="99.40" width="22.8" height="22.8" fill="#b4b4b4"/><rect x="68.60" y="99.40" width="22.8" height="22.8" fill="#e9e9e9"/><rect x="99.20" y="99.40" width="22.8" height="22.8" fill="#e9e9e9"/><rect x="129.80" y="99.40" width="22.8" height="22.8" fill="#e9e9e9"/><rect x="160.40" y="99.40" width="22.8" height="22.8" fill="#e9e9e9"/><rect x="191.00" y="99.40" width="22.8" height="22.8" fill="#e9e9e9"/><rect x="7.40" y="130.00" width="22.8" height="22.8" fill="#e9e9e9"/><rect x="38.00" y="130.00" width="22.8" height="22.8" fill="#b4b4b4"/><rect x="68.60" y="130.00" width="22.8" height="22.8" fill="#e9e9e9"/><rect x="99.20" y="130.00" width="22.8" height="22.8" fill="#e9e9e9"/><rect x="129.80" y="130.00" width="22.8" height="22.8" fill="#e9e9e9"/><rect x="160.40" y="130.00" width="22.8" height="22.8" fill="#e9e9e9"/><rect x="191.00" y="130.00" width="22.8" height="22.8" fill="#e9e9e9"/><rect x="7.40" y="160.60" width="22.8" height="22.8" fill="#e9e9e9"/><rect x="38.00" y="160.60" width="22.8" height="22.8" fill="#b4b4b4"/><rect x="68.60" y="160.60" width="22.8" height="22.8" fill="#b4b4b4"/><rect x="99.20" y="160.60" width="22.8" height="22.8" fill="#b4b4b4"/><rect x="129.80" y="160.60" width="22.8" height="22.8" fill="#b4b4b4"/><rect x="160.40" y="160.60" width="22.8" height="22.8" fill="#b4b4b4"/><rect x="191.00" y="160.60" width="22.8" height="22.8" fill="#e9e9e9"/><rect x="7.40" y="191.20" width="22.8" height="22.8" fill="#e9e9e9"/><rect x="38.00" y="191.20" width="22.8" height="22.8" fill="#e9e9e9"/><rect x="68.60" y="191.20" width="22.8" height="22.8" fill="#e9e9e9"/><rect x="99.20" y="191.20" width="22.8" height="22.8" fill="#e9e9e9"/><rect x="129.80" y="191.20" width="22.8" height="22.8" fill="#e9e9e9"/><rect x="160.40" y="191.20" width="22.8" height="22.8" fill="#e9e9e9"/><rect x="191.00" y="191.20" width="22.8" height="22.8" fill="#e9e9e9"/></svg><div class="fr" style="left:80.3px;top:733.5px"></div><svg style="position:absolute;left:88.7px;top:741.3px" width="229" height="229"><rect x="8" y="8" width="221" height="221" fill="#d0d0d0"/><rect x="0" y="0" width="221" height="221" fill="#e6e0b0"/><rect x="7.40" y="7.60" width="22.8" height="22.8" fill="#e9e9e9"/><rect x="38.00" y="7.60" width="22.8" height="22.8" fill="#e9e9e9"/><rect x="68.60" y="7.60" width="22.8" height="22.8" fill="#e9e9e9"/><rect x="99.20" y="7.60" width="22.8" height="22.8" fill="#e9e9e9"/><rect x="129.80" y="7.60" width="22.8" height="22.8" fill="#e9e9e9"/><rect x="160.40" y="7.60" width="22.8" height="22.8" fill="#e9e9e9"/><rect x="191.00" y="7.60" width="22.8" height="22.8" fill="#e9e9e9"/><rect x="7.40" y="38.20" width="22.8" height="22.8" fill="#e9e9e9"/><rect x="38.00" y="38.20" width="22.8" height="22.8" fill="#b4b4b4"/><rect x="68.60" y="38.20" width="22.8" height="22.8" fill="#b4b4b4"/><rect x="99.20" y="38.20" width="22.8" height="22.8" fill="#b4b4b4"/><rect x="129.80" y="38.20" width="22.8" height="22.8" fill="#b4b4b4"/><rect x="160.40" y="38.20" width="22.8" height="22.8" fill="#b4b4b4"/><rect x="191.00" y="38.20" width="22.8" height="22.8" fill="#e9e9e9"/><rect x="7.40" y="68.80" width="22.8" height="22.8" fill="#e9e9e9"/><rect x="38.00" y="68.80" width="22.8" height="22.8" fill="#b4b4b4"/><rect x="68.60" y="68.80" width="22.8" height="22.8" fill="#e9e9e9"/><rect x="99.20" y="68.80" width="22.8" height="22.8" fill="#e9e9e9"/><rect x="129.80" y="68.80" width="22.8" height="22.8" fill="#e9e9e9"/><rect x="160.40" y="68.80" width="22.8" height="22.8" fill="#e9e9e9"/><rect x="191.00" y="68.80" width="22.8" height="22.8" fill="#e9e9e9"/><rect x="7.40" y="99.40" width="22.8" height="22.8" fill="#e9e9e9"/><rect x="38.00" y="99.40" width="22.8" height="22.8" fill="#b4b4b4"/><rect x="68.60" y="99.40" width="22.8" height="22.8" fill="#e9e9e9"/><rect x="99.20" y="99.40" width="22.8" height="22.8" fill="#e9e9e9"/><rect x="129.80" y="99.40" width="22.8" height="22.8" fill="#e9e9e9"/><rect x="160.40" y="99.40" width="22.8" height="22.8" fill="#e9e9e9"/><rect x="191.00" y="99.40" width="22.8" height="22.8" fill="#e9e9e9"/><rect x="7.40" y="130.00" width="22.8" height="22.8" fill="#e9e9e9"/><rect x="38.00" y="130.00" width="22.8" height="22.8" fill="#b4b4b4"/><rect x="68.60" y="130.00" width="22.8" height="22.8" fill="#e9e9e9"/><rect x="99.20" y="130.00" width="22.8" height="22.8" fill="#e9e9e9"/><rect x="129.80" y="130.00" width="22.8" height="22.8" fill="#e9e9e9"/><rect x="160.40" y="130.00" width="22.8" height="22.8" fill="#e9e9e9"/><rect x="191.00" y="130.00" width="22.8" height="22.8" fill="#e9e9e9"/><rect x="7.40" y="160.60" width="22.8" height="22.8" fill="#e9e9e9"/><rect x="38.00" y="160.60" width="22.8" height="22.8" fill="#b4b4b4"/><rect x="68.60" y="160.60" width="22.8" height="22.8" fill="#b4b4b4"/><rect x="99.20" y="160.60" width="22.8" height="22.8" fill="#b4b4b4"/><rect x="129.80" y="160.60" width="22.8" height="22.8" fill="#b4b4b4"/><rect x="160.40" y="160.60" width="22.8" height="22.8" fill="#b4b4b4"/><rect x="191.00" y="160.60" width="22.8" height="22.8" fill="#e9e9e9"/><rect x="7.40" y="191.20" width="22.8" height="22.8" fill="#e9e9e9"/><rect x="38.00" y="191.20" width="22.8" height="22.8" fill="#e9e9e9"/><rect x="68.60" y="191.20" width="22.8" height="22.8" fill="#e9e9e9"/><rect x="99.20" y="191.20" width="22.8" height="22.8" fill="#e9e9e9"/><rect x="129.80" y="191.20" width="22.8" height="22.8" fill="#e9e9e9"/><rect x="160.40" y="191.20" width="22.8" height="22.8" fill="#e9e9e9"/><rect x="191.00" y="191.20" width="22.8" height="22.8" fill="#e9e9e9"/></svg><div class="fr" style="left:351.1px;top:733.5px"></div><svg style="position:absolute;left:359.5px;top:741.3px" width="229" height="229"><rect x="8" y="8" width="221" height="221" fill="#d0d0d0"/><rect x="0" y="0" width="221" height="221" fill="#e6e0b0"/><rect x="7.40" y="7.60" width="22.8" height="22.8" fill="#e9e9e9"/><rect x="38.00" y="7.60" width="22.8" height="22.8" fill="#e9e9e9"/><rect x="68.60" y="7.60" width="22.8" height="22.8" fill="#e9e9e9"/><rect x="99.20" y="7.60" width="22.8" height="22.8" fill="#e9e9e9"/><rect x="129.80" y="7.60" width="22.8" height="22.8" fill="#e9e9e9"/><rect x="160.40" y="7.60" width="22.8" height="22.8" fill="#e9e9e9"/><rect x="191.00" y="7.60" width="22.8" height="22.8" fill="#e9e9e9"/><rect x="7.40" y="38.20" width="22.8" height="22.8" fill="#e9e9e9"/><rect x="38.00" y="38.20" width="22.8" height="22.8" fill="#b4b4b4"/><rect x="68.60" y="38.20" width="22.8" height="22.8" fill="#b4b4b4"/><rect x="99.20" y="38.20" width="22.8" height="22.8" fill="#b4b4b4"/><rect x="129.80" y="38.20" width="22.8" height="22.8" fill="#b4b4b4"/><rect x="160.40" y="38.20" width="22.8" height="22.8" fill="#b4b4b4"/><rect x="191.00" y="38.20" width="22.8" height="22.8" fill="#e9e9e9"/><rect x="7.40" y="68.80" width="22.8" height="22.8" fill="#e9e9e9"/><rect x="38.00" y="68.80" width="22.8" height="22.8" fill="#b4b4b4"/><rect x="68.60" y="68.80" width="22.8" height="22.8" fill="#e9e9e9"/><rect x="99.20" y="68.80" width="22.8" height="22.8" fill="#e9e9e9"/><rect x="129.80" y="68.80" width="22.8" height="22.8" fill="#e9e9e9"/><rect x="160.40" y="68.80" width="22.8" height="22.8" fill="#e9e9e9"/><rect x="191.00" y="68.80" width="22.8" height="22.8" fill="#e9e9e9"/><rect x="7.40" y="99.40" width="22.8" height="22.8" fill="#e9e9e9"/><rect x="38.00" y="99.40" width="22.8" height="22.8" fill="#b4b4b4"/><rect x="68.60" y="99.40" width="22.8" height="22.8" fill="#e9e9e9"/><rect x="99.20" y="99.40" width="22.8" height="22.8" fill="#e9e9e9"/><rect x="129.80" y="99.40" width="22.8" height="22.8" fill="#e9e9e9"/><rect x="160.40" y="99.40" width="22.8" height="22.8" fill="#e9e9e9"/><rect x="191.00" y="99.40" width="22.8" height="22.8" fill="#e9e9e9"/><rect x="7.40" y="130.00" width="22.8" height="22.8" fill="#e9e9e9"/><rect x="38.00" y="130.00" width="22.8" height="22.8" fill="#b4b4b4"/><rect x="68.60" y="130.00" width="22.8" height="22.8" fill="#e9e9e9"/><rect x="99.20" y="130.00" width="22.8" height="22.8" fill="#e9e9e9"/><rect x="129.80" y="130.00" width="22.8" height="22.8" fill="#e9e9e9"/><rect x="160.40" y="130.00" width="22.8" height="22.8" fill="#e9e9e9"/><rect x="191.00" y="130.00" width="22.8" height="22.8" fill="#e9e9e9"/><rect x="7.40" y="160.60" width="22.8" height="22.8" fill="#e9e9e9"/><rect x="38.00" y="160.60" width="22.8" height="22.8" fill="#b4b4b4"/><rect x="68.60" y="160.60" width="22.8" height="22.8" fill="#b4b4b4"/><rect x="99.20" y="160.60" width="22.8" height="22.8" fill="#b4b4b4"/><rect x="129.80" y="160.60" width="22.8" height="22.8" fill="#b4b4b4"/><rect x="160.40" y="160.60" width="22.8" height="22.8" fill="#b4b4b4"/><rect x="191.00" y="160.60" width="22.8" height="22.8" fill="#e9e9e9"/><rect x="7.40" y="191.20" width="22.8" height="22.8" fill="#e9e9e9"/><rect x="38.00" y="191.20" width="22.8" height="22.8" fill="#e9e9e9"/><rect x="68.60" y="191.20" width="22.8" height="22.8" fill="#e9e9e9"/><rect x="99.20" y="191.20" width="22.8" height="22.8" fill="#e9e9e9"/><rect x="129.80" y="191.20" width="22.8" height="22.8" fill="#e9e9e9"/><rect x="160.40" y="191.20" width="22.8" height="22.8" fill="#e9e9e9"/><rect x="191.00" y="191.20" width="22.8" height="22.8" fill="#e9e9e9"/></svg><div class="fr" style="left:622.0px;top:733.5px"></div><svg style="position:absolute;left:630.4px;top:741.3px" width="229" height="229"><rect x="8" y="8" width="221" height="221" fill="#d0d0d0"/><rect x="0" y="0" width="221" height="221" fill="#b4b4e8"/><rect x="7.40" y="7.60" width="22.8" height="22.8" fill="#e9e9e9"/><rect x="38.00" y="7.60" width="22.8" height="22.8" fill="#e9e9e9"/><rect x="68.60" y="7.60" width="22.8" height="22.8" fill="#e9e9e9"/><rect x="99.20" y="7.60" width="22.8" height="22.8" fill="#e9e9e9"/><rect x="129.80" y="7.60" width="22.8" height="22.8" fill="#e9e9e9"/><rect x="160.40" y="7.60" width="22.8" height="22.8" fill="#e9e9e9"/><rect x="191.00" y="7.60" width="22.8" height="22.8" fill="#e9e9e9"/><rect x="7.40" y="38.20" width="22.8" height="22.8" fill="#e9e9e9"/><rect x="38.00" y="38.20" width="22.8" height="22.8" fill="#b4b4b4"/><rect x="68.60" y="38.20" width="22.8" height="22.8" fill="#b4b4b4"/><rect x="99.20" y="38.20" width="22.8" height="22.8" fill="#b4b4b4"/><rect x="129.80" y="38.20" width="22.8" height="22.8" fill="#b4b4b4"/><rect x="160.40" y="38.20" width="22.8" height="22.8" fill="#b4b4b4"/><rect x="191.00" y="38.20" width="22.8" height="22.8" fill="#e9e9e9"/><rect x="7.40" y="68.80" width="22.8" height="22.8" fill="#e9e9e9"/><rect x="38.00" y="68.80" width="22.8" height="22.8" fill="#b4b4b4"/><rect x="68.60" y="68.80" width="22.8" height="22.8" fill="#e9e9e9"/><rect x="99.20" y="68.80" width="22.8" height="22.8" fill="#e9e9e9"/><rect x="129.80" y="68.80" width="22.8" height="22.8" fill="#e9e9e9"/><rect x="160.40" y="68.80" width="22.8" height="22.8" fill="#e9e9e9"/><rect x="191.00" y="68.80" width="22.8" height="22.8" fill="#e9e9e9"/><rect x="7.40" y="99.40" width="22.8" height="22.8" fill="#e9e9e9"/><rect x="38.00" y="99.40" width="22.8" height="22.8" fill="#b4b4b4"/><rect x="68.60" y="99.40" width="22.8" height="22.8" fill="#e9e9e9"/><rect x="99.20" y="99.40" width="22.8" height="22.8" fill="#e9e9e9"/><rect x="129.80" y="99.40" width="22.8" height="22.8" fill="#e9e9e9"/><rect x="160.40" y="99.40" width="22.8" height="22.8" fill="#e9e9e9"/><rect x="191.00" y="99.40" width="22.8" height="22.8" fill="#e9e9e9"/><rect x="7.40" y="130.00" width="22.8" height="22.8" fill="#e9e9e9"/><rect x="38.00" y="130.00" width="22.8" height="22.8" fill="#b4b4b4"/><rect x="68.60" y="130.00" width="22.8" height="22.8" fill="#e9e9e9"/><rect x="99.20" y="130.00" width="22.8" height="22.8" fill="#e9e9e9"/><rect x="129.80" y="130.00" width="22.8" height="22.8" fill="#e9e9e9"/><rect x="160.40" y="130.00" width="22.8" height="22.8" fill="#e9e9e9"/><rect x="191.00" y="130.00" width="22.8" height="22.8" fill="#e9e9e9"/><rect x="7.40" y="160.60" width="22.8" height="22.8" fill="#e9e9e9"/><rect x="38.00" y="160.60" width="22.8" height="22.8" fill="#b4b4b4"/><rect x="68.60" y="160.60" width="22.8" height="22.8" fill="#b4b4b4"/><rect x="99.20" y="160.60" width="22.8" height="22.8" fill="#b4b4b4"/><rect x="129.80" y="160.60" width="22.8" height="22.8" fill="#b4b4b4"/><rect x="160.40" y="160.60" width="22.8" height="22.8" fill="#b4b4b4"/><rect x="191.00" y="160.60" width="22.8" height="22.8" fill="#e9e9e9"/><rect x="7.40" y="191.20" width="22.8" height="22.8" fill="#e9e9e9"/><rect x="38.00" y="191.20" width="22.8" height="22.8" fill="#e9e9e9"/><rect x="68.60" y="191.20" width="22.8" height="22.8" fill="#e9e9e9"/><rect x="99.20" y="191.20" width="22.8" height="22.8" fill="#e9e9e9"/><rect x="129.80" y="191.20" width="22.8" height="22.8" fill="#e9e9e9"/><rect x="160.40" y="191.20" width="22.8" height="22.8" fill="#e9e9e9"/><rect x="191.00" y="191.20" width="22.8" height="22.8" fill="#e9e9e9"/></svg>
<div class="lbl" style="left:682px;top:362px">1 (2) - Kopie - Kopie.png</div><div class="lbl" style="left:161px;top:675.5px">1 (3) - Kopie.png</div><div class="lbl" style="left:452px;top:675.5px">1 (3).png</div><div class="lbl" style="left:682px;top:675.5px">1 (4) - Kopie - Kopie.png</div>
</div></div>
<div class="menu m1" style="left:-2px;top:55px;width:214px;height:455px"><div class="tx" style="left:25.2px;top:1px;color:#000">Окно при запуске</div><svg style="position:absolute;left:198.8px;top:4.7px" width="6" height="9"><path d="M0.3 0.6 L4.6 4.3 L0.3 8 Z" fill="#000"/></svg><div class="tx" style="left:25.2px;top:21px;color:#000">Раскладка при запуске</div><svg style="position:absolute;left:198.8px;top:24.7px" width="6" height="9"><path d="M0.3 0.6 L4.6 4.3 L0.3 8 Z" fill="#000"/></svg><div class="tx" style="left:25.2px;top:41px;color:#000">Панель</div><svg style="position:absolute;left:198.8px;top:44.7px" width="6" height="9"><path d="M0.3 0.6 L4.6 4.3 L0.3 8 Z" fill="#000"/></svg><div class="hlb" style="left:0px;width:211px;top:61px"></div><div class="tx" style="left:25.2px;top:61px;color:#fff">Дерево папок</div><svg style="position:absolute;left:198.8px;top:64.7px" width="6" height="9"><path d="M0.3 0.6 L4.6 4.3 L0.3 8 Z" fill="#fff"/></svg><div class="tx" style="left:25.2px;top:81px;color:#000">Заголовок окна</div><svg style="position:absolute;left:198.8px;top:84.7px" width="6" height="9"><path d="M0.3 0.6 L4.6 4.3 L0.3 8 Z" fill="#000"/></svg><div class="tx" style="left:25.2px;top:101px;color:#000">Адресная строка</div><svg style="position:absolute;left:198.8px;top:104.7px" width="6" height="9"><path d="M0.3 0.6 L4.6 4.3 L0.3 8 Z" fill="#000"/></svg><div class="tx" style="left:25.2px;top:121px;color:#000">Цвета и стили</div><svg style="position:absolute;left:198.8px;top:124.7px" width="6" height="9"><path d="M0.3 0.6 L4.6 4.3 L0.3 8 Z" fill="#000"/></svg><div class="tx" style="left:25.2px;top:141px;color:#000">Строка состояния</div><svg style="position:absolute;left:198.8px;top:144.7px" width="6" height="9"><path d="M0.3 0.6 L4.6 4.3 L0.3 8 Z" fill="#000"/></svg><div class="tx" style="left:25.2px;top:161px;color:#000">Размер файлов</div><div class="sc" style="right:21.5px;top:161px;color:#000">[F9]</div><svg style="position:absolute;left:198.8px;top:164.7px" width="6" height="9"><path d="M0.3 0.6 L4.6 4.3 L0.3 8 Z" fill="#000"/></svg><div class="tx" style="left:25.2px;top:181px;color:#000">Вкладки</div><svg style="position:absolute;left:198.8px;top:184.7px" width="6" height="9"><path d="M0.3 0.6 L4.6 4.3 L0.3 8 Z" fill="#000"/></svg><div class="tx" style="left:25.2px;top:201px;color:#000">Файловые операции</div><svg style="position:absolute;left:198.8px;top:204.7px" width="6" height="9"><path d="M0.3 0.6 L4.6 4.3 L0.3 8 Z" fill="#000"/></svg><div class="tx" style="left:25.2px;top:221px;color:#000">Печать активной панели</div><svg style="position:absolute;left:198.8px;top:224.7px" width="6" height="9"><path d="M0.3 0.6 L4.6 4.3 L0.3 8 Z" fill="#000"/></svg><div class="tx" style="left:25.2px;top:241px;color:#000">Просмотр</div><svg style="position:absolute;left:198.8px;top:244.7px" width="6" height="9"><path d="M0.3 0.6 L4.6 4.3 L0.3 8 Z" fill="#000"/></svg><div class="tx" style="left:25.2px;top:261px;color:#000">Шрифт</div><svg style="position:absolute;left:198.8px;top:264.7px" width="6" height="9"><path d="M0.3 0.6 L4.6 4.3 L0.3 8 Z" fill="#000"/></svg><div class="tx" style="left:25.2px;top:281px;color:#000">Найти папку или файл</div><div class="sc" style="right:21.5px;top:281px;color:#000">F3</div><svg style="position:absolute;left:198.8px;top:284.7px" width="6" height="9"><path d="M0.3 0.6 L4.6 4.3 L0.3 8 Z" fill="#000"/></svg><div class="tx" style="left:25.2px;top:301px;color:#000">Настройки внешнего вида</div><svg style="position:absolute;left:198.8px;top:304.7px" width="6" height="9"><path d="M0.3 0.6 L4.6 4.3 L0.3 8 Z" fill="#000"/></svg><div class="sep" style="left:11px;width:239px;top:326px"></div><div class="tx" style="left:25.2px;top:331px;color:#000">Q-Dir по умолчанию</div><svg style="position:absolute;left:198.8px;top:334.7px" width="6" height="9"><path d="M0.3 0.6 L4.6 4.3 L0.3 8 Z" fill="#000"/></svg><div class="sep" style="left:11px;width:239px;top:356px"></div><div class="tx" style="left:25.2px;top:361px;color:#000">Настройки Windows</div><svg style="position:absolute;left:198.8px;top:364.7px" width="6" height="9"><path d="M0.3 0.6 L4.6 4.3 L0.3 8 Z" fill="#000"/></svg><div class="tx" style="left:25.2px;top:381px;color:#000">Сетевой диск</div><svg style="position:absolute;left:198.8px;top:384.7px" width="6" height="9"><path d="M0.3 0.6 L4.6 4.3 L0.3 8 Z" fill="#000"/></svg><div class="tx" style="left:25.2px;top:401px;color:#000">Автозагрузка</div><svg style="position:absolute;left:198.8px;top:404.7px" width="6" height="9"><path d="M0.3 0.6 L4.6 4.3 L0.3 8 Z" fill="#000"/></svg><div class="sep" style="left:11px;width:239px;top:426px"></div><div class="tx" style="left:25.2px;top:431px;color:#000">Дополнительно..</div></div>
<div class="menu m2" style="left:206px;top:114px;width:370px;height:555.5px"><div class="tx" style="left:26.5px;top:2px;color:#000">Общее</div><div class="sc" style="right:23px;top:2px;color:#000">(1x)</div><div class="tx" style="left:26.5px;top:22px;color:#000">В каждой панели</div><div class="sc" style="right:23px;top:22px;color:#000">(1x-4x)</div><div class="tx" style="left:26.5px;top:42px;color:#000">Отключить</div><div class="sc" style="right:23px;top:42px;color:#000">(0x)</div><div class="sep" style="left:12px;width:344px;top:67px"></div><div class="tx" style="left:26.5px;top:72px;color:#000">Папки</div><svg style="position:absolute;left:354.8px;top:75.7px" width="6" height="9"><path d="M0.3 0.6 L4.6 4.3 L0.3 8 Z" fill="#000"/></svg><div class="sep" style="left:12px;width:344px;top:97px"></div><div class="tx" style="left:26.5px;top:102px;color:#000">Использовать цвета</div><div class="tx" style="left:26.5px;top:122px;color:#000">Жирный шрифт</div><div class="tx" style="left:26.5px;top:142px;color:#000">По умолчанию</div><div class="sep" style="left:12px;width:344px;top:167px"></div><div class="tx" style="left:26.5px;top:172px;color:#000">Глубина сканирования 4 подпапки</div><div class="sc" style="right:23px;top:172px;color:#000">[ + ][ ]</div><div class="tx" style="left:26.5px;top:192px;color:#000">Отключить анимацию</div><div class="sep" style="left:12px;width:344px;top:217px"></div><div class="tx" style="left:26.5px;top:222px;color:#000">Ширина отступа(пикселей)</div><svg style="position:absolute;left:354.8px;top:225.7px" width="6" height="9"><path d="M0.3 0.6 L4.6 4.3 L0.3 8 Z" fill="#000"/></svg><div class="hlb" style="left:2px;width:364px;top:242px"></div><div class="tx" style="left:26.5px;top:242px;color:#fff">Автораскрытие</div><svg style="position:absolute;left:354.8px;top:245.7px" width="6" height="9"><path d="M0.3 0.6 L4.6 4.3 L0.3 8 Z" fill="#fff"/></svg><div class="sep" style="left:12px;width:344px;top:267px"></div><div class="tx" style="left:26.5px;top:272px;color:#000">В дереве папок показывать:</div><div class="tx" style="left:26.5px;top:292px;color:#000">Только папки</div><div class="tx" style="left:26.5px;top:312px;color:#000">Всё видимое</div><div class="sep" style="left:12px;width:344px;top:337px"></div><div class="tx" style="left:26.5px;top:342px;color:#000">Выбирать всю строку</div><div class="tx" style="left:26.5px;top:362px;color:#000">Разворачивать по щелчку мыши</div><div class="tx" style="left:26.5px;top:382px;color:#000">Сворачивать автоматически</div><div class="tx" style="left:26.5px;top:402px;color:#000">Синхронно с панелью</div><div class="tx" style="left:26.5px;top:422px;color:#000">При выборе раскрывать папку и в панели</div><div class="sep" style="left:12px;width:344px;top:447px"></div><div class="tx" style="left:26.5px;top:452px;color:#000">Скрыть линии</div><div class="tx" style="left:26.5px;top:472px;color:#000">Линии(кнопки) как директории</div><div class="tx" style="left:26.5px;top:492px;color:#000">При запуске программы развернуть Избранное(W7/8)</div><div class="tx" style="left:26.5px;top:512px;color:#000">Функция в разработке</div><div class="tx" style="left:26.5px;top:532px;color:#000">Не использовать структуру каталогов W7/Vista</div></div>
<div class="menu m3" style="left:570px;top:354px;width:90px;height:126px"><div class="tx" style="left:26px;top:2px;color:#000">0,2c</div><div class="tx" style="left:26px;top:22px;color:#000">0,5c</div><div class="tx" style="left:26px;top:42px;color:#000">1,0c</div><div class="hlb" style="left:2px;width:84px;top:62px"></div><div class="tx" style="left:26px;top:62px;color:#fff">1,5c</div><div class="tx" style="left:26px;top:82px;color:#000">2,0c</div><div class="tx" style="left:26px;top:102px;color:#000">3,0c</div></div>
<svg style="position:absolute;left:2px;top:487px" width="18" height="20" viewBox="2 487 18 20"><rect x="4.6" y="489.6" width="10.7" height="14.5" fill="#fde79c" stroke="#e9c648" stroke-width="1.2"/><rect x="14.5" y="498.4" width="1.8" height="5.7" fill="#fde79c" stroke="#e9c648" stroke-width="1.1"/></svg><svg style="position:absolute;left:210px;top:119px" width="18" height="16" viewBox="210 119 18 16"><rect x="213" y="122.2" width="12" height="10.6" fill="#000"/><rect x="212" y="121" width="11.7" height="10.6" fill="#838383"/><rect x="215.7" y="122" width="3.3" height="4" fill="#fff"/><rect x="220" y="122" width="3" height="4" fill="#fff"/><rect x="215.7" y="127" width="3.3" height="3.9" fill="#fff"/><rect x="220" y="127" width="3" height="3.9" fill="#fff"/></svg><svg style="position:absolute;left:210px;top:139px" width="18" height="16" viewBox="210 139 18 16"><rect x="214.2" y="142.2" width="10.8" height="10.6" fill="#000"/><rect x="213.1" y="141" width="10.6" height="10.6" fill="#838383"/><rect x="215.8" y="142" width="2.2" height="4" fill="#fff"/><rect x="220.8" y="142" width="2.2" height="4" fill="#fff"/><rect x="215.8" y="147" width="2.2" height="4" fill="#fff"/><rect x="220.8" y="147" width="2.2" height="4" fill="#fff"/></svg><svg style="position:absolute;left:210px;top:159px" width="18" height="16" viewBox="210 159 18 16"><rect x="214.2" y="162.2" width="10.8" height="10.6" fill="#000"/><rect x="213.1" y="161" width="10.6" height="10.6" fill="#838383"/><rect x="214" y="162" width="4.2" height="4" fill="#f4f4f4"/><rect x="219" y="162" width="4" height="4" fill="#f4f4f4"/><rect x="214" y="167" width="4.2" height="4" fill="#f4f4f4"/><rect x="219" y="167" width="4" height="4" fill="#f4f4f4"/></svg>
<div class="an sh" style="left:39.5px;top:8.8px">(1)</div><div class="an" style="left:36px;top:5.8px">(1)</div><div class="an sh" style="left:131.7px;top:95px">(2)</div><div class="an" style="left:128.2px;top:92px">(2)</div><div class="an sh" style="left:418.9px;top:335px">(3)</div><div class="an" style="left:415.4px;top:332px">(3)</div><div class="an sh" style="left:642.5px;top:394.7px">(4)</div><div class="an" style="left:639px;top:391.7px">(4)</div>
<div style="position:absolute;left:659px;top:354px;width:1px;height:126px;background:#979797"></div>
</body></html>
